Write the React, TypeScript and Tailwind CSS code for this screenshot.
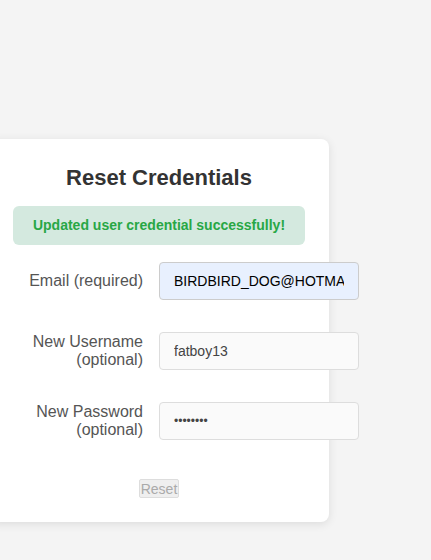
import React from 'react';

export default function App() {
  return (
    <div className="min-h-[560px] w-full overflow-hidden bg-[#f4f4f4] font-['Liberation_Sans',Arial,sans-serif]">
      <div className="pt-[139px] pl-0">
        {/* Card */}
        <div className="ml-[-11px] w-[340px] h-[383px] bg-white rounded-lg shadow-[0_2px_10px_rgba(0,0,0,0.1)] px-6 pt-[25px]">
          <h2 className="text-center text-[22px] font-bold text-[#333] leading-[28px]">Reset Credentials</h2>

          <div className="mt-[14px] h-[39px] rounded-md bg-[#d4e9df] flex items-center justify-center">
            <span className="text-[14px] font-bold text-[#28a745]">Updated user credential successfully!</span>
          </div>

          <div className="mt-[17px] flex flex-col gap-[32px]">
            <div className="flex items-center gap-4">
              <label className="w-[130px] shrink-0 text-right text-[16px] leading-[18px] text-[#555]">Email (required)</label>
              <input
                type="text"
                defaultValue="BIRDBIRD_DOG@HOTMAIL.COM"
                className="w-[200px] h-[38px] shrink-0 rounded border border-[#ccc] bg-[#e8f0fe] px-[14px] text-[14px] text-black outline-none"
              />
            </div>

            <div className="flex items-center gap-4">
              <label className="w-[130px] shrink-0 text-right text-[16px] leading-[18px] text-[#555]">
                New Username
                <br />
                (optional)
              </label>
              <input
                type="text"
                defaultValue="fatboy13"
                className="w-[200px] h-[38px] shrink-0 rounded border border-[#ddd] bg-[#fafafa] px-[14px] text-[14px] text-[#444] outline-none"
              />
            </div>

            <div className="flex items-center gap-4">
              <label className="w-[130px] shrink-0 text-right text-[16px] leading-[18px] text-[#555]">
                New Password
                <br />
                (optional)
              </label>
              <input
                type="password"
                defaultValue="password"
                className="w-[200px] h-[38px] shrink-0 rounded border border-[#ddd] bg-[#fafafa] px-[14px] text-[12px] text-[#444] outline-none"
              />
            </div>
          </div>

          <div className="mt-[39px] flex justify-center">
            <button
              disabled
              className="h-[19px] px-[1px] text-[14px] leading-[16px] text-[#aaa] bg-[#efefef] border border-[#ddd] rounded-[2px]"
            >
              Reset
            </button>
          </div>
        </div>
      </div>
    </div>
  );
}
